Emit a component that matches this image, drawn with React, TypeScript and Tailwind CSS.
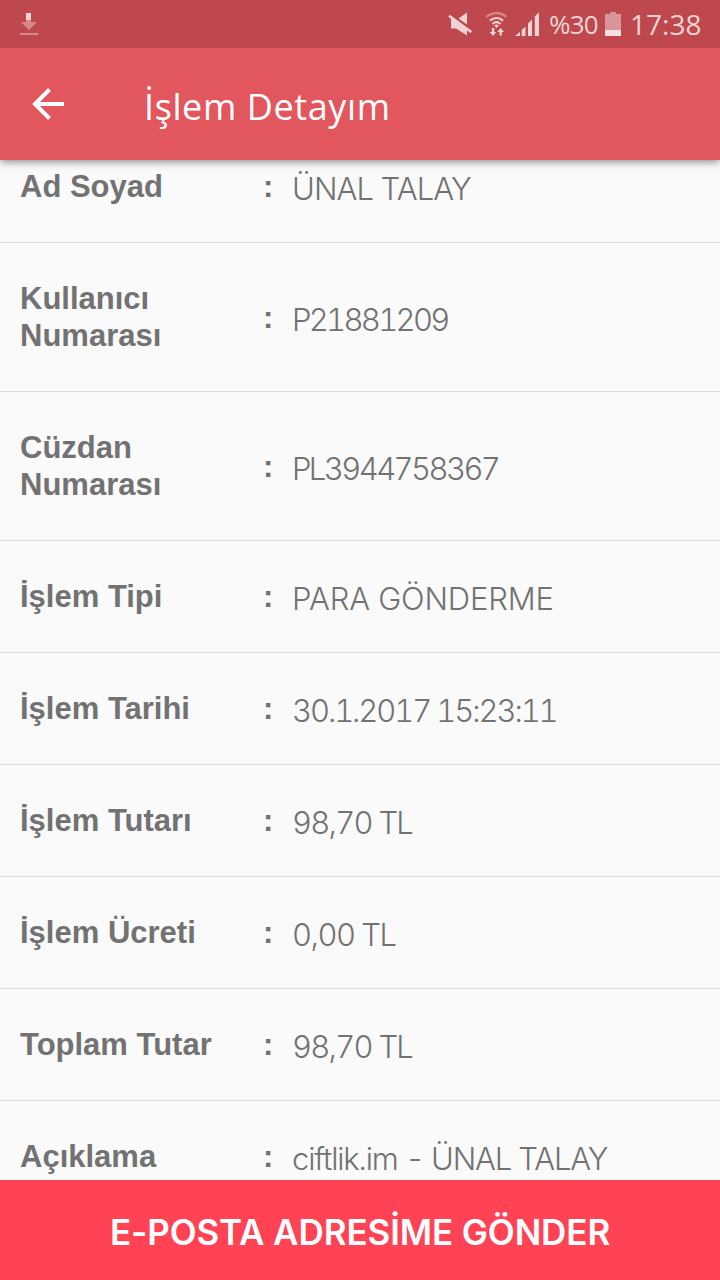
import React from "react";

interface Detail {
  label: string;
  value: string;
  tracking: string;
}

const details: Detail[] = [
  { label: "Ad Soyad", value: "ÜNAL TALAY", tracking: "tracking-[-0.9px]" },
  { label: "Kullanıcı Numarası", value: "P21881209", tracking: "tracking-[-2.7px]" },
  { label: "Cüzdan Numarası", value: "PL3944758367", tracking: "tracking-[-2.6px]" },
  { label: "İşlem Tipi", value: "PARA GÖNDERME", tracking: "tracking-[-0.15px]" },
  { label: "İşlem Tarihi", value: "30.1.2017 15:23:11", tracking: "tracking-[-2.1px]" },
  { label: "İşlem Tutarı", value: "98,70 TL", tracking: "tracking-[-1.75px]" },
  { label: "İşlem Ücreti", value: "0,00 TL", tracking: "tracking-[-1.5px]" },
  { label: "Toplam Tutar", value: "98,70 TL", tracking: "tracking-[-1.75px]" },
  { label: "Açıklama", value: "ciftlik.im - ÜNAL TALAY", tracking: "tracking-[-1.15px]" },
];

const DownloadIcon = () => (
  <svg width="18" height="24" viewBox="0 0 18 24">
    <path d="M6 1h5v7H6z" fill="#f0d3d5" />
    <path d="M6 8h5v2h6l-8 8-8-8h5z" fill="#d9878c" />
    <path d="M0 21h18v2H0z" fill="#d9878c" />
  </svg>
);

const MuteIcon = () => (
  <svg width="24" height="24" viewBox="0 0 24 24" fill="#f0d3d5">
    <path d="M19 .5v12L10.500 6.500zM3 6l16 11v6.500L8 16.500H3z" />
    <path d="M1 3.800L23.300 20" stroke="#f0d3d5" strokeWidth="2.4" />
  </svg>
);

const WifiIcon = () => (
  <svg width="22" height="24" viewBox="0 0 22 24" fill="none" stroke="#f0d3d5" strokeWidth="2.2" className="overflow-visible">
    <path d="M-.5 4.900C5.500-.2 13.500-.2 19.500 4.900" stroke="#d9878c" />
    <path d="M3 8.700c4-3.400 9-3.400 13 0M5.500 12c2.400-2.200 5.600-2.200 8 0" />
    <path d="M7.300 13.500q2.200-1.800 4.400 0L9.500 16z" fill="#f0d3d5" stroke="none" />
    <path d="M7.300 16v4h2L6 24 2.600 20h2.200v-4zM14.800 23.500V20H17l-3.400-4-3.300 4h2.200v3.500z" fill="#f0d3d5" stroke="none" />
  </svg>
);

const SignalIcon = () => (
  <svg width="24" height="24" viewBox="0 0 24 24" fill="#f0d3d5" className="overflow-visible">
    <path d="M-1 24l5-4v4zM5.700 18l3.800-3.500V24H5.700zM12 11.500l4-4V24h-4zM18.800 4.500L23 .3V24h-4.200z" />
  </svg>
);

const BatteryIcon = () => (
  <svg width="16" height="24" viewBox="0 0 16 24">
    <path d="M0 2h5V0h6v2h5v16H0z" fill="#d9959a" />
    <path d="M0 18h16v6H0z" fill="#f5e0e1" />
  </svg>
);

const BackIcon = () => (
  <svg width="32" height="32" viewBox="0 0 32 32" fill="none" stroke="#fff" strokeWidth="4">
    <path d="M32 16H4M17.500 1.500L3 16l14.500 14.500" />
  </svg>
);

const StatusBar: React.FC = () => {
  return (
    <div className="flex h-12 items-center bg-[#be484d] pl-5 pr-[19px] text-[#f0d3d5]">
      <DownloadIcon />
      <div className="ml-auto flex items-center">
        <MuteIcon />
        <span className="ml-[15px]"><WifiIcon /></span>
        <span className="ml-[7px]"><SignalIcon /></span>
        <span className="ml-[9px] w-[50px] whitespace-nowrap text-[26px] leading-none tracking-[-0.8px]">%30</span>
        <span className="ml-[6px]"><BatteryIcon /></span>
        <span className="ml-[9px] w-[71px] whitespace-nowrap text-[28px] leading-none">17:38</span>
      </div>
    </div>
  );
};

const App: React.FC = () => {
  return (
    <div className="flex h-[1280px] w-[720px] flex-col overflow-hidden bg-[#fafafa] font-['Open_Sans',sans-serif]">
      <header className="relative z-10 shadow-[0_2px_8px_rgba(0,0,0,0.45)]">
        <StatusBar />
        <div className="flex h-28 items-center bg-[#e2575e] pl-8 text-white">
          <BackIcon />
          <h1 className="ml-[80px] pt-1.5 text-[36px] tracking-[0.6px]">İşlem Detayım</h1>
        </div>
      </header>

      {/* list is scrolled a little under the header */}
      <main className="min-h-0 flex-1 overflow-hidden">
        <div className="-mt-[29px]">
          {details.map((item) => (
            <div key={item.label} className="flex items-center border-b border-[#dcdcdc] py-[37px] pl-5 text-[#727272]">
              <div className="w-[243px] pr-[50px] font-['Liberation_Sans',sans-serif] text-[31px] font-bold leading-[37px]">
                {item.label}
              </div>
              <div className="w-[29px] font-['Liberation_Sans',sans-serif] text-[31px] font-bold leading-[37px]">:</div>
              <div className={`-mb-1 whitespace-nowrap font-['Inter',sans-serif] text-[31px] font-light leading-[37px] tabular-nums ${item.tracking}`}>
                {item.value}
              </div>
            </div>
          ))}
        </div>
      </main>

      <button className="h-[100px] bg-[#ff4254] pt-1 font-['Inter',sans-serif] text-[35px] font-semibold tracking-[-0.1px] text-white">
        E-POSTA ADRESİME GÖNDER
      </button>
    </div>
  );
};

export default App;
